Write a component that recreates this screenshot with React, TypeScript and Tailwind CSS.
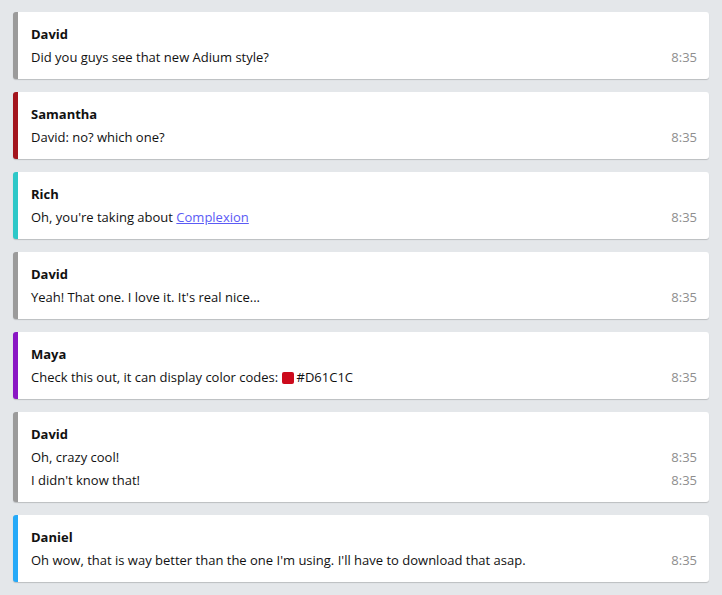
const messages = [
  { name: "David", color: "border-l-[#9b9b9b]", lines: [["Did you guys see that new Adium style?"]] },
  { name: "Samantha", color: "border-l-[#a3151d]", lines: [["David: no? which one?"]] },
  { name: "Rich", color: "border-l-[#2ec8c8]", lines: [["Oh, you're taking about ", { link: "Complexion" }]] },
  { name: "David", color: "border-l-[#9b9b9b]", lines: [["Yeah! That one. I love it. It's real nice..."]] },
  { name: "Maya", color: "border-l-[#8a17c4]", lines: [["Check this out, it can display color codes: ", { swatch: "#D61C1C" }]] },
  { name: "David", color: "border-l-[#9b9b9b]", lines: [["Oh, crazy cool!"], ["I didn't know that!"]] },
  { name: "Daniel", color: "border-l-[#26aaf8]", lines: [["Oh wow, that is way better than the one I'm using. I'll have to download that asap."]] },
];

type Part = string | { link: string } | { swatch: string };

function Line({ parts }: { parts: Part[] }) {
  return (
    <div className="flex items-center justify-between h-[23px]">
      <span className="flex items-center">
        {parts.map((p, i) =>
          typeof p === "string" ? (
            <span key={i} className="whitespace-pre">{p}</span>
          ) : "link" in p ? (
            <a key={i} href="#" className="text-[#5b5bf5] underline">{p.link}</a>
          ) : (
            <span key={i} className="flex items-center">
              <span className="inline-block w-3 h-3 rounded-[2px] bg-[#cc0a1c] mr-[3px]"></span>
              {p.swatch}
            </span>
          )
        )}
      </span>
      <span className="text-[#8e8e8e]">8:35</span>
    </div>
  );
}

export default function App() {
  return (
    <div className="min-h-screen bg-[#e4e7ea] px-[13px] pt-3 pb-3 font-['Open_Sans',sans-serif] text-[13px] text-[#111]">
      <div className="flex flex-col gap-[13px]">
        {messages.map((m, i) => (
          <div key={i} className={`bg-white rounded-[3px] border-l-[5px] ${m.color} pl-[13px] pr-3 pt-[11px] pb-[10px] shadow-[0_1px_1px_rgba(0,0,0,0.18)]`}>
            <div className="h-[23px] flex items-center font-bold">{m.name}</div>
            {m.lines.map((l, j) => (
              <Line key={j} parts={l as Part[]} />
            ))}
          </div>
        ))}
      </div>
    </div>
  );
}
